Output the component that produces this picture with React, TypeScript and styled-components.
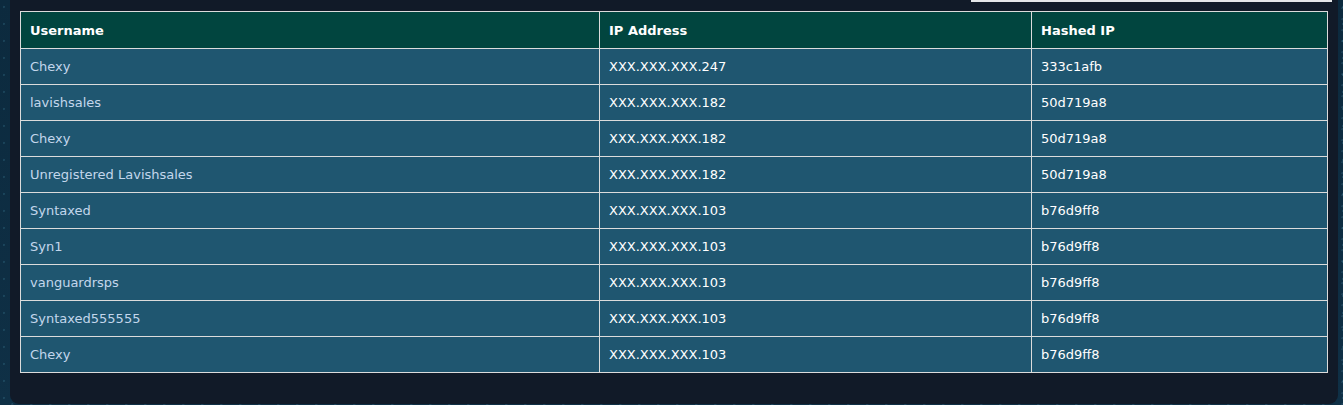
import styled, { createGlobalStyle } from "styled-components";

const GlobalStyle = createGlobalStyle`
  html, body {
    margin: 0;
    padding: 0;
  }
  body {
    min-height: 405px;
    background-color: #0c2234;
    background-image:
      radial-gradient(circle at 30% 40%, rgba(80, 160, 190, 0.2) 0 0.8px, transparent 1.4px),
      radial-gradient(circle at 65% 75%, rgba(110, 180, 210, 0.16) 0 0.8px, transparent 1.4px),
      linear-gradient(180deg, #0c2a3e 0%, #0f3046 100%);
    background-size: 13px 17px, 19px 11px, 100% 100%;
    font-family: "DejaVu Sans", Verdana, sans-serif;
  }
`;

const Page = styled.div`
  padding: 0 5px 0 10px;
`;

const Panel = styled.div`
  background: #111a28;
  border-radius: 0 0 9px 9px;
  padding: 0 10px 31px;
`;

const TopStrip = styled.div`
  display: flex;
  justify-content: flex-end;
  margin-right: -4px;
  height: 11px;

  &::before {
    content: "";
    width: 361px;
    height: 2px;
    background: #e4e6e8;
  }
`;

const Table = styled.table`
  width: 100%;
  table-layout: fixed;
  border-collapse: collapse;
  border: 1px solid #dcdcdc;
  font-size: 13px;
`;

const HeadCell = styled.th<{ $width?: number }>`
  box-sizing: border-box;
  width: ${(p) => (p.$width ? `${p.$width}px` : "auto")};
  height: 37px;
  padding: 0 9px;
  background: #01453f;
  border: 1px solid #dcdcdc;
  color: #ffffff;
  font-weight: bold;
  text-align: left;
  vertical-align: middle;
`;

const Row = styled.tr`
  background: #1f5670;
`;

const Cell = styled.td<{ $muted?: boolean }>`
  box-sizing: border-box;
  height: 36px;
  padding: 0 9px;
  border: 1px solid #dcdcdc;
  color: ${(p) => (p.$muted ? "#c3d6ec" : "#ffffff")};
  vertical-align: middle;
`;

const rows = [
  { user: "Chexy", ip: "XXX.XXX.XXX.247", hash: "333c1afb" },
  { user: "lavishsales", ip: "XXX.XXX.XXX.182", hash: "50d719a8" },
  { user: "Chexy", ip: "XXX.XXX.XXX.182", hash: "50d719a8" },
  { user: "Unregistered Lavishsales", ip: "XXX.XXX.XXX.182", hash: "50d719a8" },
  { user: "Syntaxed", ip: "XXX.XXX.XXX.103", hash: "b76d9ff8" },
  { user: "Syn1", ip: "XXX.XXX.XXX.103", hash: "b76d9ff8" },
  { user: "vanguardrsps", ip: "XXX.XXX.XXX.103", hash: "b76d9ff8" },
  { user: "Syntaxed555555", ip: "XXX.XXX.XXX.103", hash: "b76d9ff8" },
  { user: "Chexy", ip: "XXX.XXX.XXX.103", hash: "b76d9ff8" },
];

export default function App() {
  return (
    <>
      <GlobalStyle />
      <Page>
        <Panel>
          <TopStrip />
          <Table>
            <thead>
              <tr>
                <HeadCell $width={579}>Username</HeadCell>
                <HeadCell $width={432}>IP Address</HeadCell>
                <HeadCell>Hashed IP</HeadCell>
              </tr>
            </thead>
            <tbody>
              {rows.map((row, i) => (
                <Row key={i}>
                  <Cell $muted>{row.user}</Cell>
                  <Cell>{row.ip}</Cell>
                  <Cell>{row.hash}</Cell>
                </Row>
              ))}
            </tbody>
          </Table>
        </Panel>
      </Page>
    </>
  );
}
